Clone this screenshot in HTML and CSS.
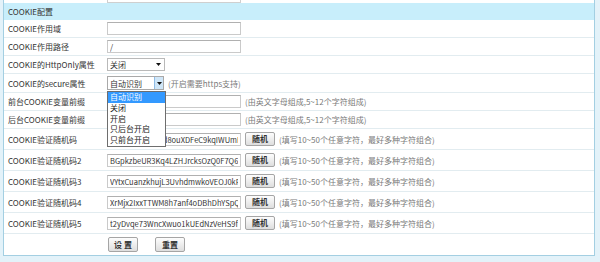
FILE: index.html
```html
<!DOCTYPE html>
<html lang="en">
<head>
    <meta charset="UTF-8">
    <title>COOKIE配置</title>
    <link rel="stylesheet" href="styles.css">
</head>
<body>
    <div class="panel">
        <div class="edge"><span></span></div>
        <table class="config">
            <colgroup><col class="label-col"><col></colgroup>
            <tr class="title"><th colspan="2">COOKIE配置</th></tr>
            <tr>
                <td class="name">COOKIE作用域</td>
                <td><div class="field"><input class="text" type="text" value=""></div></td>
            </tr>
            <tr>
                <td class="name">COOKIE作用路径</td>
                <td><div class="field"><input class="text" type="text" value="/"></div></td>
            </tr>
            <tr>
                <td class="name">COOKIE的HttpOnly属性</td>
                <td>
                    <div class="field">
                        <div class="select">
                            <span>关闭</span>
                            <svg class="arrow" width="5" height="3" viewBox="0 0 5 3"><polygon points="0,0 5,0 2.5,3" fill="#111"/></svg>
                        </div>
                    </div>
                </td>
            </tr>
            <tr>
                <td class="name">COOKIE的secure属性</td>
                <td>
                    <div class="field">
                        <div class="select open">
                            <span>自动识别</span>
                            <span class="arrow-btn"><svg width="5" height="3" viewBox="0 0 5 3"><polygon points="0,0 5,0 2.5,3" fill="#111"/></svg></span>
                            <ul class="options">
                                <li class="on">自动识别</li>
                                <li>关闭</li>
                                <li>开启</li>
                                <li>只后台开启</li>
                                <li>只前台开启</li>
                            </ul>
                        </div>
                        <span class="tip">(开启需要https支持)</span>
                    </div>
                </td>
            </tr>
            <tr>
                <td class="name">前台COOKIE变量前缀</td>
                <td><div class="field"><input class="text" type="text" value=""><span class="tip">(由英文字母组成,5~12个字符组成)</span></div></td>
            </tr>
            <tr>
                <td class="name">后台COOKIE变量前缀</td>
                <td><div class="field"><input class="text" type="text" value=""><span class="tip">(由英文字母组成,5~12个字符组成)</span></div></td>
            </tr>
            <tr class="tall">
                <td class="name">COOKIE验证随机码</td>
                <td><div class="field"><input class="text code" type="text" value="Qm3Rz7tWbN5d8ouXDFeC9kqIWUmFa2Lp"><button class="btn" type="button">随机</button><span class="tip">(填写10~50个任意字符，最好多种字符组合)</span></div></td>
            </tr>
            <tr class="tall">
                <td class="name">COOKIE验证随机码2</td>
                <td><div class="field"><input class="text code" type="text" value="BGpkzbeUR3Kq4LZHJrcksOzQ0F7Q6mNc"><button class="btn" type="button">随机</button><span class="tip">(填写10~50个任意字符，最好多种字符组合)</span></div></td>
            </tr>
            <tr class="tall">
                <td class="name">COOKIE验证随机码3</td>
                <td><div class="field"><input class="text code" type="text" value="VYtxCuanzkhujL3UvhdmwkoVEOJ0kRw2"><button class="btn" type="button">随机</button><span class="tip">(填写10~50个任意字符，最好多种字符组合)</span></div></td>
            </tr>
            <tr class="tall">
                <td class="name">COOKIE验证随机码4</td>
                <td><div class="field"><input class="text code" type="text" value="XrMjx2IxxTTWM8h7anf4oDBhDhYSpQe1"><button class="btn" type="button">随机</button><span class="tip">(填写10~50个任意字符，最好多种字符组合)</span></div></td>
            </tr>
            <tr class="tall">
                <td class="name">COOKIE验证随机码5</td>
                <td><div class="field"><input class="text code" type="text" value="t2yDvqe73WncXwuo1kUEdNzVeHS9fBk4"><button class="btn" type="button">随机</button><span class="tip">(填写10~50个任意字符，最好多种字符组合)</span></div></td>
            </tr>
            <tr class="actions">
                <td class="name"></td>
                <td>
                    <div class="field">
                        <button class="btn big" type="button">设 置</button>
                        <button class="btn big" type="button">重置</button>
                    </div>
                </td>
            </tr>
        </table>
    </div>
</body>
</html>
```

FILE: styles.css
```css
body {
    margin: 0;
    background: #e3f2f9;
    font-family: "Noto Sans CJK SC", sans-serif;
    font-size: 8px;
    color: #333;
}

.panel {
    margin-left: 3px;
    width: 590px;
    background: #fff;
    border: 1px solid #a3cfe2;
    border-top: 0;
}

/* bottom of the row above, cut by the scroll */
.edge {
    height: 3px;
    padding-left: 103px;
}

.edge span {
    display: block;
    width: 132px;
    height: 2px;
    border: 1px solid #cfcfcf;
    border-top: 0;
}

.config {
    width: 100%;
    border-collapse: collapse;
    table-layout: fixed;
}

.label-col {
    width: 99px;
}

.config th {
    background: #c8eefb;
    text-align: left;
    font-weight: normal;
    padding: 0 4px;
    line-height: 17px;
}

.config td {
    padding: 2px 4px;
    border-bottom: 1px solid #e2ecf0;
    vertical-align: middle;
}

.config td.name {
    white-space: nowrap;
    overflow: hidden;
}

.config tr.tall td {
    padding: 3px 4px;
}

.config tr.actions td {
    padding: 3px 4px;
    border-bottom: 0;
}

.field {
    display: flex;
    align-items: center;
    gap: 4px;
    line-height: 13px;
}

.text {
    flex: 0 0 134px;
    width: 134px;
    height: 13px;
    box-sizing: border-box;
    margin: 0;
    padding: 0 2px;
    border: 1px solid #cacaca;
    border-top-color: #b0b0b0;
    font: inherit;
    color: #333;
    background: #fff;
}

.text.code {
    font-size: 7.5px;
}

.select {
    position: relative;
    flex: 0 0 auto;
    width: 58px;
    height: 13px;
    box-sizing: border-box;
    border: 1px solid #b9b9b9;
    display: flex;
    align-items: center;
    padding-left: 2px;
    background: #fff;
}

.select span {
    flex: 1;
}

.select .arrow {
    margin-right: 3px;
}

.select.open {
    width: 57px;
    height: 14px;
    border-color: #a9a9a9;
}

.arrow-btn {
    flex: 0 0 auto !important;
    width: 8px;
    height: 12px;
    background: #cfe6f8;
    border-left: 1px solid #8fbce6;
    display: flex;
    align-items: center;
    justify-content: center;
}

.options {
    position: absolute;
    left: -1px;
    top: 14px;
    width: 59px;
    box-sizing: border-box;
    margin: 0;
    padding: 0;
    list-style: none;
    background: #fff;
    border: 1px solid #6e6e6e;
    z-index: 2;
}

.options li {
    height: 10.8px;
    line-height: 10.8px;
    padding-left: 2px;
    color: #222;
    overflow: hidden;
    white-space: nowrap;
}

.options li.on {
    background: #3399ff;
    color: #fff;
}

.tip {
    color: #7a7a7a;
    white-space: nowrap;
}

.btn {
    flex: 0 0 30px;
    width: 30px;
    height: 14px;
    margin: 0;
    padding: 0;
    border: 1px solid #a5a5a5;
    border-radius: 2px;
    background: linear-gradient(#fdfdfd, #dedede);
    font: inherit;
    font-weight: bold;
    color: #333;
    line-height: 12px;
    white-space: nowrap;
}

.btn.big {
    height: 15px;
}

.actions .field {
    gap: 17px;
    padding-left: 1px;
}
```
